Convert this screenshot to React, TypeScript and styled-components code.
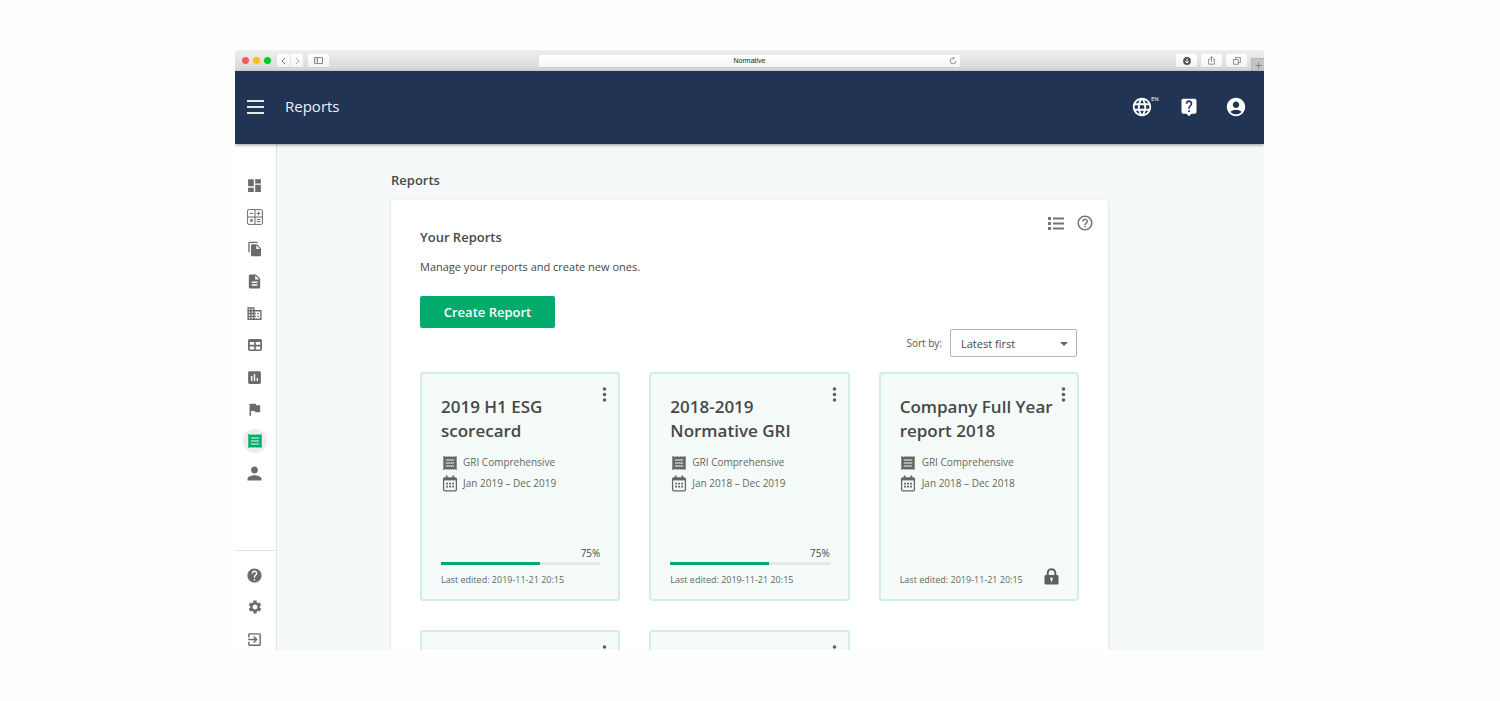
import React from "react";
import styled, { createGlobalStyle } from "styled-components";
import {
  MdAccountCircle,
  MdAssessment,
  MdBusiness,
  MdDashboard,
  MdDescription,
  MdExitToApp,
  MdFileCopy,
  MdFlag,
  MdHelp,
  MdHelpOutline,
  MdLanguage,
  MdLiveHelp,
  MdPerson,
  MdSettings,
} from "react-icons/md";

const GlobalStyle = createGlobalStyle`
  *, *::before, *::after { box-sizing: border-box; }
  body {
    margin: 0;
    background: #fefefe;
    color: #484848;
    font-family: "Open Sans", "Noto Sans", sans-serif;
  }
  button, input, select { font-family: inherit; color: inherit; margin: 0; }
  h1, h2, h3, p, ul { margin: 0; padding: 0; }
  ul { list-style: none; }
  svg { display: block; }
`;

const Stage = styled.div`
  display: flex;
  height: 100vh;
  padding: 50px 236px 51px 235px;
`;

const BrowserWindow = styled.div`
  flex: 1;
  min-width: 0;
  display: flex;
  flex-direction: column;
  overflow: hidden;
  border-radius: 3px 3px 0 0;
`;

/* ---------- browser chrome ---------- */

const Chrome = styled.div`
  flex: none;
  display: grid;
  grid-template-columns: 1fr 421px 1fr;
  align-items: center;
  height: 21px;
  background: linear-gradient(#efefef, #d6d6d6);
`;

const ChromeLeft = styled.div`
  display: flex;
  align-items: center;
  padding-left: 7px;
`;

const Light = styled.span<{ $color: string }>`
  width: 7px;
  height: 7px;
  margin-right: 4px;
  border-radius: 50%;
  background: ${(p) => p.$color};
`;

const ChromeButton = styled.button<{ $width: number; $joined?: boolean }>`
  display: flex;
  align-items: center;
  justify-content: center;
  width: ${(p) => p.$width}px;
  height: 13px;
  padding: 0;
  border: 0;
  border-left: ${(p) => (p.$joined ? "1px solid #e4e4e4" : "0")};
  border-radius: ${(p) => (p.$joined ? "0 2px 2px 0" : "2px")};
  background: linear-gradient(#fff, #f4f4f4);
  box-shadow: 0 1px 0 #cfcfcf;
`;

const ButtonPair = styled.div`
  display: flex;
  margin: 0 5px 0 2px;
`;

const AddressBar = styled.div`
  position: relative;
  display: flex;
`;

const Address = styled.input`
  width: 100%;
  height: 12px;
  padding: 0;
  border: 0;
  border-radius: 2px;
  background: linear-gradient(#fff, #f6f6f6);
  box-shadow: 0 1px 0 #cfcfcf;
  color: #222;
  font: 7px "Liberation Sans", sans-serif;
  text-align: center;
`;

const Reload = styled.button`
  position: absolute;
  top: 2px;
  right: 3px;
  padding: 0;
  border: 0;
  background: none;
`;

const ChromeRight = styled.div`
  display: flex;
  align-self: stretch;
  align-items: center;
  justify-content: flex-end;
  gap: 4px;
`;

const NewTab = styled.button`
  display: flex;
  align-items: center;
  justify-content: center;
  align-self: flex-end;
  width: 13px;
  height: 13px;
  padding: 0;
  border: 1px solid #b4b4b4;
  border-width: 1px 0 0 1px;
  background: #c4c4c4;
`;

/* ---------- application header ---------- */

const AppHeader = styled.header`
  position: relative;
  flex: none;
  display: flex;
  align-items: center;
  height: 73px;
  padding: 0 17px 2px 12px;
  background: #223454;
  box-shadow: 0 1px 3px rgba(0, 0, 0, 0.4);
  color: #fff;
`;

const HeaderButton = styled.button`
  position: relative;
  display: flex;
  padding: 0;
  border: 0;
  background: none;
  color: #fff;
`;

const HeaderTitle = styled.span`
  margin-left: 21px;
  padding-bottom: 2px;
  font-size: 15px;
  line-height: 20px;
  color: #eef1f5;
`;

const HeaderActions = styled.div`
  display: flex;
  align-items: center;
  gap: 26px;
  margin-left: auto;
`;

const Locale = styled.sup`
  position: absolute;
  top: 0;
  left: 20px;
  font-size: 6px;
  line-height: 6px;
`;

/* ---------- body ---------- */

const Body = styled.div`
  flex: 1;
  min-height: 0;
  display: flex;
`;

const Sidebar = styled.nav`
  flex: none;
  width: 42px;
  padding-top: 25px;
  background: #fff;
  border-right: 1px solid #dfe3e5;
  overflow: hidden;
`;

const NavGroup = styled.ul<{ $footer?: boolean }>`
  ${(p) =>
    p.$footer &&
    `
    margin-top: 61px;
    padding-top: 8px;
    border-top: 1px solid #e4e4e4;
  `}
`;

const NavItem = styled.li`
  display: flex;
  align-items: center;
  justify-content: center;
  height: 32px;
  padding-right: 2px;
`;

const NavLink = styled.a<{ $active?: boolean }>`
  display: flex;
  align-items: center;
  justify-content: center;
  width: 24px;
  height: 24px;
  border-radius: 50%;
  background: ${(p) => (p.$active ? "#ececec" : "none")};
  color: ${(p) => (p.$active ? "#00ab6b" : "#6b6b6b")};
`;

const Main = styled.main`
  flex: 1;
  min-width: 0;
  padding: 26px 156px 0 114px;
  background: #f5f9fa;
  overflow: hidden;
`;

const PageTitle = styled.h1`
  font-size: 13px;
  font-weight: 600;
  line-height: 20px;
`;

const Panel = styled.section`
  margin-top: 10px;
  padding-bottom: 29px;
  background: #fff;
  border-radius: 2px;
  box-shadow: 0 1px 3px rgba(0, 0, 0, 0.16);
`;

const PanelHead = styled.div`
  display: flex;
  justify-content: space-between;
  padding: 0 14px 0 29px;
`;

const Intro = styled.div`
  padding-top: 27px;
`;

const PanelTitle = styled.h2`
  font-size: 13px;
  font-weight: 600;
  line-height: 20px;
`;

const Description = styled.p`
  margin-top: 11px;
  font-size: 11px;
  line-height: 18px;
`;

const CreateButton = styled.button`
  width: 135px;
  height: 32px;
  margin-top: 20px;
  padding: 0;
  border: 0;
  border-radius: 2px;
  background: #00ab6b;
  color: #fff;
  font-size: 13px;
  font-weight: 600;
`;

const Tools = styled.div`
  display: flex;
  align-items: flex-start;
  gap: 12px;
  padding-top: 14px;
`;

const IconButton = styled.button`
  display: flex;
  padding: 0;
  border: 0;
  background: none;
  color: #757575;
`;

const SortRow = styled.div`
  display: flex;
  align-items: center;
  justify-content: flex-end;
  gap: 8px;
  margin-top: 1px;
  padding: 0 31px 0 29px;
`;

const SortLabel = styled.label`
  font-size: 10px;
  color: #555;
`;

const SelectWrap = styled.div`
  position: relative;
  display: flex;
  width: 127px;

  svg {
    position: absolute;
    top: 13px;
    right: 9px;
    pointer-events: none;
  }
`;

const Select = styled.select`
  appearance: none;
  width: 100%;
  height: 28px;
  padding: 0 10px;
  border: 1px solid #b5b5b5;
  border-radius: 2px;
  background: #fff;
  font-size: 11px;
`;

const Cards = styled.div`
  display: grid;
  grid-template-columns: repeat(3, 1fr);
  gap: 29px;
  margin-top: 15px;
  padding: 0 29px;
`;

const Card = styled.article`
  position: relative;
  display: flex;
  flex-direction: column;
  min-height: 229px;
  padding: 21px 18px 11px 19px;
  border: 2px solid #d3efe3;
  border-radius: 3px;
  background: #f4fbf8;
`;

const CardMenu = styled(IconButton)`
  position: absolute;
  top: 12px;
  right: 11px;
  color: #606060;
`;

const CardTitle = styled.h3`
  font-size: 17px;
  font-weight: 600;
  line-height: 24px;
  white-space: pre;
`;

const MetaList = styled.ul`
  margin-top: 9px;
  color: #666;
  font-size: 10px;
  line-height: 21px;
`;

const Meta = styled.li`
  display: grid;
  grid-template-columns: 17px 1fr;
  align-items: center;
  gap: 5px;

  svg {
    justify-self: center;
  }
`;

const CardFoot = styled.div`
  display: flex;
  flex-direction: column;
  margin-top: auto;
`;

const Percent = styled.span`
  align-self: flex-end;
  font-size: 10px;
  line-height: 14px;
`;

const Track = styled.div`
  height: 3px;
  margin-top: 2px;
  background: #e5e8e7;
`;

const Fill = styled.div`
  height: 3px;
  background: #00ab6b;
`;

const EditedRow = styled.div`
  display: flex;
  align-items: flex-end;
  justify-content: space-between;
  padding-top: 7px;
  color: #666;

  svg {
    margin-bottom: 3px;
  }
`;

const Edited = styled.p`
  font-size: 9px;
  line-height: 16px;
`;

/* ---------- drawings ---------- */

const MenuIcon = () => (
  <svg width="17" height="14" viewBox="0 0 17 14" fill="#e6eaf0">
    <path d="M0 0h17v2H0zM0 6h17v2H0zM0 12h17v2H0z" />
  </svg>
);

const CalculatorIcon = () => (
  <svg width="16" height="16" viewBox="0 0 16 16" fill="none" stroke="currentColor">
    <rect x="0.6" y="0.6" width="14.8" height="14.8" rx="1.2" />
    <path d="M8 1v14M1 8h14M2.8 4.4h3.4M9.8 4.4h3.6M11.6 2.6v3.6M9.8 10.4h3.6M9.8 12.6h3.6" />
    <path d="M3.4 10.4l2.2 2.2M5.6 10.4l-2.2 2.2" strokeWidth="1.4" />
  </svg>
);

const TableIcon = () => (
  <svg width="14" height="12" viewBox="0 0 14 12" fill="currentColor" fillRule="evenodd">
    <path d="M1.8 0h10.4Q14 0 14 1.8v8.4Q14 12 12.200 12H1.800Q0 12 0 10.200V1.800Q0 0 1.800 0zM1.700 3v2.800h4.500V3zM7.800 3v2.800h4.500V3zM1.700 7.400v3h4.500v-3zM7.800 7.400v3h4.500v-3z" />
  </svg>
);

const ReceiptIcon = () => (
  <svg width="14" height="14" viewBox="0 0 14 14">
    <rect x="1" y="1" width="12" height="12" fill="currentColor" />
    <path d="M.5 .8h13M.5 13.200h13" stroke="currentColor" strokeDasharray="1.500 .9" />
    <path d="M.8 .5v13M13.200 .5v13" stroke="currentColor" />
    <path d="M2.800 4h8.400M2.800 7h8.400M2.800 10h8.400" stroke="#f0f5f3" strokeWidth="1.200" />
  </svg>
);

const ListIcon = () => (
  <svg width="16" height="18" viewBox="0 0 16 18" fill="currentColor">
    <path d="M0 3h3v3H0zM5 3.500h11v2H5zM0 8h3v3H0zM5 8.500h11v2H5zM0 13h3v3H0zM5 13.500h11v2H5z" />
  </svg>
);

const DotsIcon = () => (
  <svg width="5" height="17" viewBox="0 0 5 17" fill="currentColor">
    <circle cx="2.500" cy="3" r="1.800" />
    <circle cx="2.500" cy="8.500" r="1.800" />
    <circle cx="2.500" cy="14" r="1.800" />
  </svg>
);

const CalendarIcon = () => (
  <svg width="16" height="17" viewBox="0 0 16 17" fill="none" stroke="currentColor">
    <rect x="1.600" y="2.800" width="12.800" height="13" rx="1.400" strokeWidth="1.300" />
    <path d="M1.500 4.200h13" strokeWidth="2.400" />
    <path d="M4.700 .4v3M11.300 .4v3" strokeWidth="1.800" />
    <path d="M4.100 8.700h8M4.100 11.700h8" strokeWidth="1.800" strokeDasharray="1.900 1.100" />
  </svg>
);

const LockIcon = () => (
  <svg width="15" height="17" viewBox="0 0 15 17">
    <path d="M3.700 8V5a3.800 3.800 0 0 1 7.600 0v3" fill="none" stroke="#606060" strokeWidth="2" />
    <rect x="0.500" y="7" width="14" height="9.500" rx="1.200" fill="#606060" />
    <circle cx="7.500" cy="10.800" r="1.300" fill="#f4fbf8" />
    <path d="M7.500 10.800v2.900" stroke="#f4fbf8" strokeWidth="1.200" />
  </svg>
);

const Chevron = ({ flip }: { flip?: boolean }) => (
  <svg width="5" height="8" viewBox="0 0 5 8" fill="none" stroke={flip ? "#b0b0b0" : "#6e6e6e"}>
    <path d={flip ? "M1 1l3 3-3 3" : "M4 1L1 4l3 3"} />
  </svg>
);

const PanesIcon = () => (
  <svg width="9" height="7" viewBox="0 0 9 7" fill="none" stroke="#8a8a8a">
    <path d="M.5.5h8v6h-8zM3.500 1v5" />
    <path d="M1.500 2h1M1.500 4h1" />
  </svg>
);

const ReloadIcon = () => (
  <svg width="8" height="8" viewBox="0 0 8 8" fill="none" stroke="#777" strokeWidth="0.800">
    <path d="M6.800 4a2.800 2.800 0 1 1-2.800-2.800h1M4 .1l1.200 1.100L4 2.400" />
  </svg>
);

const DownloadIcon = () => (
  <svg width="8" height="8" viewBox="0 0 8 8">
    <circle cx="4" cy="4" r="3.900" fill="#555" />
    <path d="M4 1.800v4M2.300 4.200L4 6l1.700-1.800" fill="none" stroke="#fff" />
  </svg>
);

const ShareIcon = () => (
  <svg width="7" height="9" viewBox="0 0 7 9" fill="none" stroke="#777" strokeWidth="0.800">
    <path d="M2.300 3.200H.6v5h5.800v-5H4.700M3.500 6V.7M2.200 2l1.300-1.300L4.800 2" />
  </svg>
);

const WindowsIcon = () => (
  <svg width="8" height="8" viewBox="0 0 8 8" fill="none" stroke="#777" strokeWidth="0.800">
    <path d="M.5 2.500h4.800v4.800H.5zM2.500 2.500v-2h4.900v5H5.300" />
  </svg>
);

const PlusIcon = () => (
  <svg width="7" height="7" viewBox="0 0 7 7" stroke="#808080">
    <path d="M3.500.5v6M.5 3.500h6" />
  </svg>
);

const CaretIcon = () => (
  <svg width="8" height="4" viewBox="0 0 8 4" fill="#666">
    <path d="M0 0h8L4 4z" />
  </svg>
);

/* ---------- data ---------- */

const mainNav = [
  { label: "Dashboard", icon: <MdDashboard size={17} /> },
  { label: "Calculator", icon: <CalculatorIcon /> },
  { label: "Files", icon: <MdFileCopy size={16} /> },
  { label: "Documents", icon: <MdDescription size={17} /> },
  { label: "Company", icon: <MdBusiness size={17} /> },
  { label: "Tables", icon: <TableIcon /> },
  { label: "Statistics", icon: <MdAssessment size={17} /> },
  { label: "Goals", icon: <MdFlag size={17} /> },
  { label: "Reports", icon: <ReceiptIcon />, active: true },
  { label: "Profile", icon: <MdPerson size={21} /> },
];

const footerNav = [
  { label: "Help", icon: <MdHelp size={17} /> },
  { label: "Settings", icon: <MdSettings size={16} /> },
  { label: "Log out", icon: <MdExitToApp size={17} /> },
];

interface Report {
  title: string;
  period: string;
  done?: { label: string; fill: number };
  edited: string;
}

const reports: Report[] = [
  {
    title: "2019 H1 ESG\nscorecard",
    period: "Jan 2019 – Dec 2019",
    done: { label: "75%", fill: 62 },
    edited: "2019-11-21 20:15",
  },
  {
    title: "2018-2019\nNormative GRI",
    period: "Jan 2018 – Dec 2019",
    done: { label: "75%", fill: 62 },
    edited: "2019-11-21 20:15",
  },
  {
    title: "Company Full Year\nreport 2018",
    period: "Jan 2018 – Dec 2018",
    edited: "2019-11-21 20:15",
  },
];

const MenuButton = () => (
  <CardMenu aria-label="Report menu">
    <DotsIcon />
  </CardMenu>
);

const ReportCard = ({ report }: { report: Report }) => (
  <Card>
    <MenuButton />
    <CardTitle>{report.title}</CardTitle>
    <MetaList>
      <Meta>
        <ReceiptIcon />
        GRI Comprehensive
      </Meta>
      <Meta>
        <CalendarIcon />
        {report.period}
      </Meta>
    </MetaList>
    <CardFoot>
      {report.done && (
        <>
          <Percent>{report.done.label}</Percent>
          <Track role="progressbar" aria-label="Progress" aria-valuetext={report.done.label}>
            <Fill style={{ width: `${report.done.fill}%` }} />
          </Track>
        </>
      )}
      <EditedRow>
        <Edited>Last edited: {report.edited}</Edited>
        {!report.done && <LockIcon />}
      </EditedRow>
    </CardFoot>
  </Card>
);

export default function App() {
  return (
    <>
      <GlobalStyle />
      <Stage>
        <BrowserWindow>
          <Chrome>
            <ChromeLeft>
              <Light $color="#ff5b52" />
              <Light $color="#ffbe10" />
              <Light $color="#00ca2c" />
              <ButtonPair>
                <ChromeButton $width={13} aria-label="Back">
                  <Chevron />
                </ChromeButton>
                <ChromeButton $width={13} $joined aria-label="Forward">
                  <Chevron flip />
                </ChromeButton>
              </ButtonPair>
              <ChromeButton $width={21} aria-label="Show sidebar">
                <PanesIcon />
              </ChromeButton>
            </ChromeLeft>
            <AddressBar>
              <Address aria-label="Address" defaultValue="Normative" />
              <Reload aria-label="Reload">
                <ReloadIcon />
              </Reload>
            </AddressBar>
            <ChromeRight>
              <ChromeButton $width={21} aria-label="Downloads">
                <DownloadIcon />
              </ChromeButton>
              <ChromeButton $width={21} aria-label="Share">
                <ShareIcon />
              </ChromeButton>
              <ChromeButton $width={21} aria-label="Tab overview">
                <WindowsIcon />
              </ChromeButton>
              <NewTab aria-label="New tab">
                <PlusIcon />
              </NewTab>
            </ChromeRight>
          </Chrome>

          <AppHeader>
            <HeaderButton aria-label="Menu">
              <MenuIcon />
            </HeaderButton>
            <HeaderTitle>Reports</HeaderTitle>
            <HeaderActions>
              <HeaderButton aria-label="Language">
                <MdLanguage size={22} />
                <Locale>EN</Locale>
              </HeaderButton>
              <HeaderButton aria-label="Support">
                <MdLiveHelp size={20} />
              </HeaderButton>
              <HeaderButton aria-label="Account">
                <MdAccountCircle size={22} />
              </HeaderButton>
            </HeaderActions>
          </AppHeader>

          <Body>
            <Sidebar aria-label="Main">
              <NavGroup>
                {mainNav.map((item) => (
                  <NavItem key={item.label}>
                    <NavLink href="#" aria-label={item.label} $active={item.active}>
                      {item.icon}
                    </NavLink>
                  </NavItem>
                ))}
              </NavGroup>
              <NavGroup $footer>
                {footerNav.map((item) => (
                  <NavItem key={item.label}>
                    <NavLink href="#" aria-label={item.label}>
                      {item.icon}
                    </NavLink>
                  </NavItem>
                ))}
              </NavGroup>
            </Sidebar>

            <Main>
              <PageTitle>Reports</PageTitle>
              <Panel>
                <PanelHead>
                  <Intro>
                    <PanelTitle>Your Reports</PanelTitle>
                    <Description>Manage your reports and create new ones.</Description>
                    <CreateButton>Create Report</CreateButton>
                  </Intro>
                  <Tools>
                    <IconButton aria-label="List view">
                      <ListIcon />
                    </IconButton>
                    <IconButton aria-label="Help">
                      <MdHelpOutline size={18} />
                    </IconButton>
                  </Tools>
                </PanelHead>
                <SortRow>
                  <SortLabel htmlFor="sort">Sort by:</SortLabel>
                  <SelectWrap>
                    <Select id="sort">
                      <option>Latest first</option>
                    </Select>
                    <CaretIcon />
                  </SelectWrap>
                </SortRow>
                <Cards>
                  {reports.map((report) => (
                    <ReportCard key={report.title} report={report} />
                  ))}
                  <Card>
                    <MenuButton />
                  </Card>
                  <Card>
                    <MenuButton />
                  </Card>
                </Cards>
              </Panel>
            </Main>
          </Body>
        </BrowserWindow>
      </Stage>
    </>
  );
}
